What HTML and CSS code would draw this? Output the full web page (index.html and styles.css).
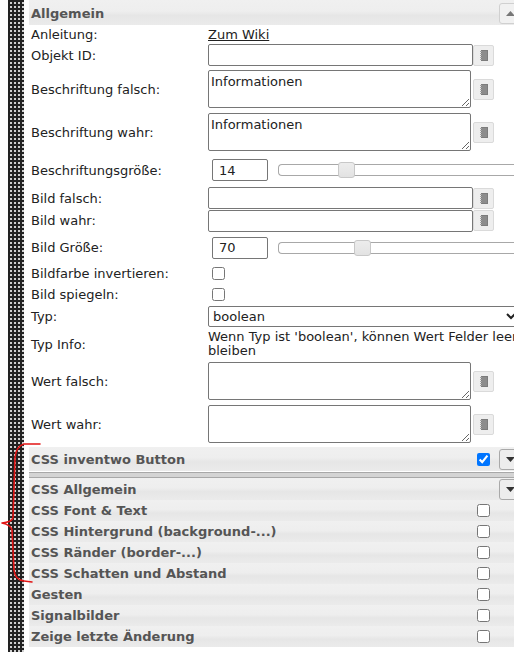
FILE: index.html
```html
<!DOCTYPE html>
<html>
<head>
<meta charset="utf-8">
<link rel="stylesheet" href="styles.css">
</head>
<body>
<div class="page">
  <div class="strip"></div>
  <div class="panel">
    <div class="hdr hdr-top">
      <span class="htxt">Allgemein</span>
      <span class="hbtn up"><svg width="9" height="5" viewBox="0 0 9 5"><path d="M0 5 L4.5 0 L9 5 Z" fill="#777"/></svg></span>
    </div>

    <div class="row h18"><div class="lbl">Anleitung:</div><div class="fld"><a class="wiki" href="#">Zum Wiki</a></div></div>

    <div class="row h24"><div class="lbl">Objekt ID:</div><div class="fld"><input class="txt" type="text"><span class="ibtn"><svg width="8" height="11" viewBox="0 0 8 11"><rect x="1.5" y="0.5" width="6" height="10" fill="#8c8c8c" stroke="#7c7c7c" stroke-width="1"/><path d="M0 1.5h2M0 3.5h2M0 5.5h2M0 7.5h2M0 9.5h2" stroke="#a5a5a5" stroke-width="1"/></svg></span></div></div>

    <div class="row h44"><div class="lbl">Beschriftung falsch:</div><div class="fld"><textarea class="ta">Informationen</textarea><span class="ibtn gap"><svg width="8" height="11" viewBox="0 0 8 11"><rect x="1.5" y="0.5" width="6" height="10" fill="#8c8c8c" stroke="#7c7c7c" stroke-width="1"/><path d="M0 1.5h2M0 3.5h2M0 5.5h2M0 7.5h2M0 9.5h2" stroke="#a5a5a5" stroke-width="1"/></svg></span></div></div>

    <div class="row h42"><div class="lbl">Beschriftung wahr:</div><div class="fld"><textarea class="ta">Informationen</textarea><span class="ibtn gap"><svg width="8" height="11" viewBox="0 0 8 11"><rect x="1.5" y="0.5" width="6" height="10" fill="#8c8c8c" stroke="#7c7c7c" stroke-width="1"/><path d="M0 1.5h2M0 3.5h2M0 5.5h2M0 7.5h2M0 9.5h2" stroke="#a5a5a5" stroke-width="1"/></svg></span></div></div>

    <div class="row h34"><div class="lbl">Beschriftungsgröße:</div><div class="fld"><input class="num" type="text" value="14"><div class="slider"><span class="handle" style="left:59px"></span></div></div></div>

    <div class="row h21"><div class="lbl">Bild falsch:</div><div class="fld"><input class="txt" type="text"><span class="ibtn"><svg width="8" height="11" viewBox="0 0 8 11"><rect x="1.5" y="0.5" width="6" height="10" fill="#8c8c8c" stroke="#7c7c7c" stroke-width="1"/><path d="M0 1.5h2M0 3.5h2M0 5.5h2M0 7.5h2M0 9.5h2" stroke="#a5a5a5" stroke-width="1"/></svg></span></div></div>

    <div class="row h25"><div class="lbl">Bild wahr:</div><div class="fld"><input class="txt" type="text"><span class="ibtn"><svg width="8" height="11" viewBox="0 0 8 11"><rect x="1.5" y="0.5" width="6" height="10" fill="#8c8c8c" stroke="#7c7c7c" stroke-width="1"/><path d="M0 1.5h2M0 3.5h2M0 5.5h2M0 7.5h2M0 9.5h2" stroke="#a5a5a5" stroke-width="1"/></svg></span></div></div>

    <div class="row h29"><div class="lbl">Bild Größe:</div><div class="fld"><input class="num" type="text" value="70"><div class="slider"><span class="handle" style="left:75px"></span></div></div></div>

    <div class="row h22"><div class="lbl">Bildfarbe invertieren:</div><div class="fld"><input class="cb" type="checkbox"></div></div>

    <div class="row h21"><div class="lbl">Bild spiegeln:</div><div class="fld"><input class="cb" type="checkbox"></div></div>

    <div class="row h22"><div class="lbl">Typ:</div><div class="fld"><select class="sel"><option>boolean</option></select></div></div>

    <div class="row h34"><div class="lbl">Typ Info:</div><div class="fld info">Wenn Typ ist 'boolean', können Wert Felder leer<br>bleiben</div></div>

    <div class="row h40"><div class="lbl">Wert falsch:</div><div class="fld"><textarea class="ta"></textarea><span class="ibtn gap"><svg width="8" height="11" viewBox="0 0 8 11"><rect x="1.5" y="0.5" width="6" height="10" fill="#8c8c8c" stroke="#7c7c7c" stroke-width="1"/><path d="M0 1.5h2M0 3.5h2M0 5.5h2M0 7.5h2M0 9.5h2" stroke="#a5a5a5" stroke-width="1"/></svg></span></div></div>

    <div class="row h46"><div class="lbl">Wert wahr:</div><div class="fld"><textarea class="ta"></textarea><span class="ibtn gap"><svg width="8" height="11" viewBox="0 0 8 11"><rect x="1.5" y="0.5" width="6" height="10" fill="#8c8c8c" stroke="#7c7c7c" stroke-width="1"/><path d="M0 1.5h2M0 3.5h2M0 5.5h2M0 7.5h2M0 9.5h2" stroke="#a5a5a5" stroke-width="1"/></svg></span></div></div>

    <div class="hdr h24">
      <span class="htxt">CSS inventwo Button</span>
      <input class="hcb" type="checkbox" checked>
      <span class="hbtn down"><svg width="9" height="5" viewBox="0 0 9 5"><path d="M0 0 L9 0 L4.5 5 Z" fill="#333"/></svg></span>
    </div>
    <div class="bar"></div>
    <div class="hdr h22">
      <span class="htxt">CSS Allgemein</span>
      <span class="hbtn down"><svg width="9" height="5" viewBox="0 0 9 5"><path d="M0 0 L9 0 L4.5 5 Z" fill="#333"/></svg></span>
    </div>
    <div class="hdr h21 cbrow"><span class="htxt">CSS Font &amp; Text</span><input class="hcb" type="checkbox"></div>
    <div class="hdr h21 cbrow"><span class="htxt">CSS Hintergrund (background-...)</span><input class="hcb" type="checkbox"></div>
    <div class="hdr h21 cbrow"><span class="htxt">CSS Ränder (border-...)</span><input class="hcb" type="checkbox"></div>
    <div class="hdr h21 cbrow"><span class="htxt">CSS Schatten und Abstand</span><input class="hcb" type="checkbox"></div>
    <div class="hdr h21 cbrow"><span class="htxt">Gesten</span><input class="hcb" type="checkbox"></div>
    <div class="hdr h21 cbrow"><span class="htxt">Signalbilder</span><input class="hcb" type="checkbox"></div>
    <div class="hdr h21 cbrow"><span class="htxt">Zeige letzte Änderung</span><input class="hcb" type="checkbox"></div>
  </div>
</div>
<svg class="brace" width="44" height="150" viewBox="0 440 44 150">
  <path d="M40 444 L24 444 Q16 446 15 458 L13 518 Q12 522 2 523 Q11 525 12 530 L14 570 Q15 580 24 581 L32 582" fill="none" stroke="#e21414" stroke-width="1.6" stroke-linecap="round" stroke-linejoin="round"/>
</svg>
</body>
</html>
```

FILE: styles.css
```css
html, body {
  margin: 0;
  padding: 0;
}
body {
  width: 514px;
  height: 652px;
  overflow: hidden;
  background: #fff;
  font-family: "DejaVu Sans", Verdana, sans-serif;
  font-size: 13px;
  color: #222;
  position: relative;
}
.page {
  display: flex;
  align-items: stretch;
  height: 652px;
}
.strip {
  flex: 0 0 16px;
  margin-left: 8px;
  background-color: #222;
  background-image:
    linear-gradient(to right, #222 2px, transparent 2px),
    linear-gradient(to bottom, #222 2px, #d0d0d0 2px);
  background-size: 4px 4px;
  background-position: 0 0;
}
.panel {
  margin-left: 5px;
  width: 492px;
  flex: 0 0 492px;
}
.hdr {
  display: flex;
  align-items: center;
  padding-left: 2px;
  background: linear-gradient(to bottom, #f0f0f0 0%, #eeeeee 45%, #e6e6e6 62%, #ebebeb 100%);
  color: #555;
  font-weight: bold;
  box-sizing: border-box;
}
.hdr .htxt {
  flex: 1;
  white-space: nowrap;
}
.hdr-top {
  height: 25px;
  padding-top: 1px;
}
.hbtn {
  box-sizing: border-box;
  width: 22px;
  height: 21px;
  border: 1px solid #c5c5c5;
  border-radius: 3px;
  background: #f2f2f2;
  display: flex;
  align-items: center;
  justify-content: center;
}
.hbtn.up {
  border-color: #d0d0d0;
  background: #f1f1f1;
}
.hbtn.down {
  border-color: #a9a9a9;
  background: #ededed;
}
.hcb {
  width: 13px;
  height: 13px;
  margin: 0 9px 0 0;
}
.cbrow {
  padding-right: 31px;
}
.cbrow .hcb {
  margin: 0;
}
.bar {
  height: 4px;
  border-top: 1px solid #a8a8a8;
  border-bottom: 1px solid #a8a8a8;
  background: #d4d4d4;
  margin-top: 1px;
}
.h18 { height: 18px; }
.h21 { height: 21px; }
.h22 { height: 22px; }
.h24 { height: 24px; }
.h25 { height: 25px; }
.h29 { height: 29px; }
.h34 { height: 34px; }
.h40 { height: 40px; }
.h42 { height: 42px; }
.h44 { height: 44px; }
.h46 { height: 46px; }
.row {
  display: grid;
  grid-template-columns: 179px 1fr;
  align-items: center;
}
.lbl {
  padding-left: 2px;
  white-space: nowrap;
}
.fld {
  display: flex;
  align-items: center;
  min-width: 0;
}
.wiki {
  color: #222;
  text-decoration: underline;
}
.txt {
  box-sizing: border-box;
  width: 265px;
  height: 22px;
  margin: 0;
  border: 1px solid #767676;
  border-radius: 2px;
  padding: 1px 2px;
  font: 13px "DejaVu Sans", sans-serif;
}
.ta {
  box-sizing: border-box;
  width: 263px;
  height: 38px;
  margin: 0;
  border: 1px solid #767676;
  border-radius: 2px;
  padding: 3px 2px 1px;
  font: 13px "DejaVu Sans", sans-serif;
  color: #222;
  resize: both;
}
.ibtn {
  box-sizing: border-box;
  width: 21px;
  height: 21px;
  border: 1px solid #dadada;
  border-radius: 2px;
  background: #eeeeee;
  display: flex;
  align-items: center;
  justify-content: center;
}
.ibtn.gap {
  margin-left: 2px;
}
.num {
  box-sizing: border-box;
  width: 56px;
  height: 22px;
  margin: 0 0 0 4px;
  border: 1px solid #767676;
  border-radius: 2px;
  padding: 1px 6px;
  font: 13px "DejaVu Sans", sans-serif;
  color: #222;
}
.slider {
  position: relative;
  flex: 1;
  margin-left: 10px;
  height: 12px;
  box-sizing: border-box;
  border: 1px solid #a8a8a8;
  border-right: none;
  border-radius: 4px 0 0 4px;
  background: #fff;
}
.handle {
  position: absolute;
  top: -3px;
  width: 17px;
  height: 16px;
  box-sizing: border-box;
  border: 1px solid #c8c8c8;
  border-radius: 3px;
  background: linear-gradient(to bottom, #ececec 0%, #e8e8e8 50%, #e2e2e2 100%);
}
.cb {
  width: 13px;
  height: 13px;
  margin: 0 0 0 4px;
}
.sel {
  box-sizing: border-box;
  width: 312px;
  height: 21px;
  margin: 0;
  border: 1px solid #767676;
  border-radius: 2px;
  font: 13px "DejaVu Sans", sans-serif;
  color: #222;
  background: #fff;
}
.info {
  display: block;
  line-height: 14px;
  white-space: nowrap;
}
.brace {
  position: absolute;
  left: 0;
  top: 440px;
}
```
